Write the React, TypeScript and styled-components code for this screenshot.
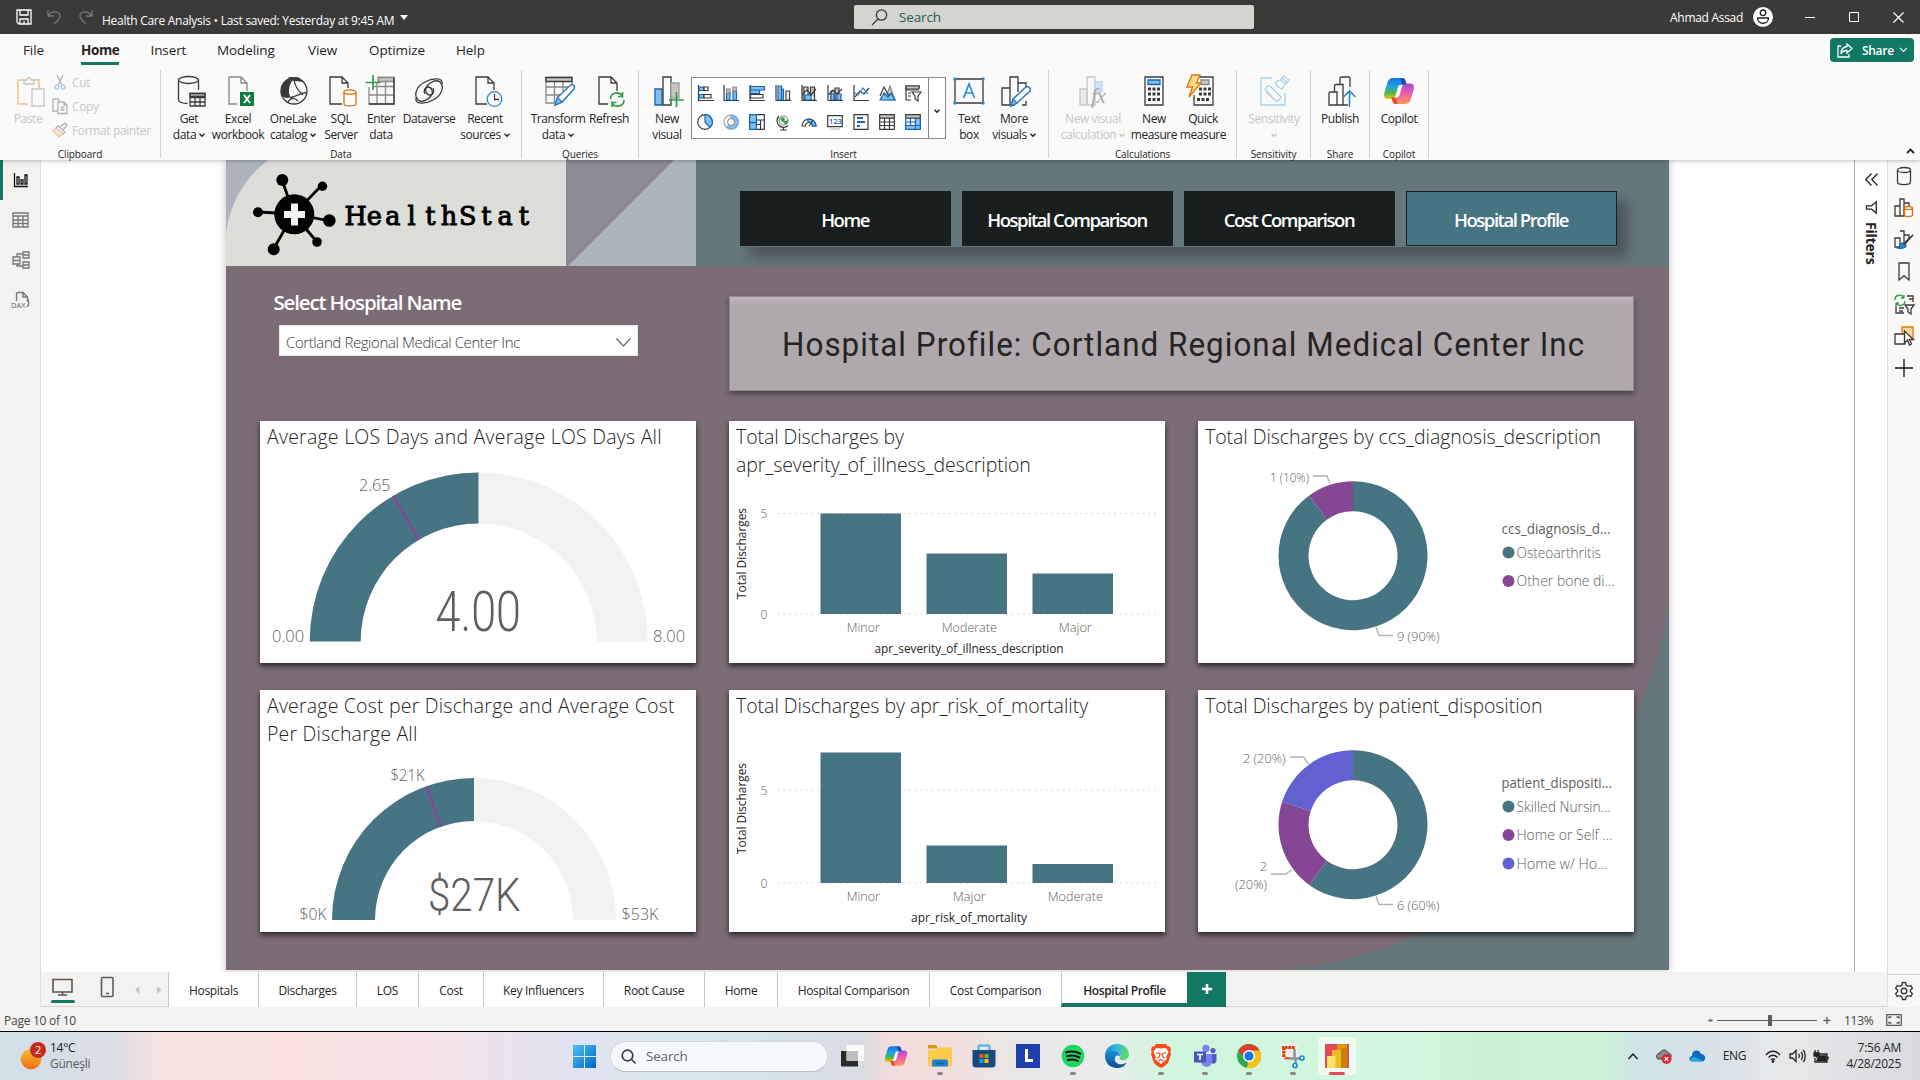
import React from "react";
import styled, { createGlobalStyle } from "styled-components";

const UI = `"Open Sans", "Noto Sans", sans-serif`;
const DIN = `Roboto, "Liberation Sans", sans-serif`;
const TEAL = "#467483";
const PLUM = "#7b6c76";
const SLATE = "#64777d";
const PURPLE = "#854794";
const BLUE = "#6161d1";
const GREEN = "#117865";
const INK = "#252423";
const GREY = "#605e5c";

const Global = createGlobalStyle`
  * { box-sizing: border-box; }
  html, body { margin: 0; padding: 0; }
  body { width: 1920px; height: 1080px; overflow: hidden; font-family: ${UI}; color: ${INK}; background: #fff; font-stretch: 90%; }
  svg { display: block; flex: none; overflow: visible; }
`;

const Screen = styled.div`
  width: 1920px;
  height: 1080px;
  display: flex;
  flex-direction: column;
`;

/* ---------- title bar ---------- */
const TitleBar = styled.header`
  height: 34px;
  background: #3b3a39;
  color: #fff;
  display: grid;
  grid-template-columns: 854px 400px 1fr;
  align-items: center;
`;
const TitleLeft = styled.div`
  display: flex;
  align-items: center;
  padding-left: 16px;
  height: 34px;
`;
const QuickIcon = styled.span<{ $gap: number }>`
  margin-right: ${(p) => p.$gap}px;
`;
const DocName = styled.span`
  font-size: 12px;
  letter-spacing: -0.27px;
  padding-top: 7px;
  white-space: pre;
`;
const Caret = styled.span`
  width: 0;
  height: 0;
  margin-left: 6px;
  border: 4px solid transparent;
  border-top: 5px solid #fff;
  border-bottom: 0;
`;
const TopSearch = styled.div`
  height: 24px;
  background: #d4d4d1;
  border-radius: 2px;
  color: #245c4f;
  display: flex;
  align-items: center;
  gap: 11px;
  padding-left: 17px;
  font-size: 13.5px;
  letter-spacing: -0.15px;
`;
const TitleRight = styled.div`
  display: flex;
  align-items: center;
  justify-content: flex-end;
  font-size: 12px;
  letter-spacing: -0.3px;
  padding-right: 16px;
`;
const UserBadge = styled.svg`
  margin-left: 10px;
`;
const WinButtons = styled.div`
  display: flex;
  align-items: center;
  gap: 34px;
  margin-left: 32px;
`;

/* ---------- ribbon ---------- */
const Ribbon = styled.section`
  height: 126px;
  background: #fafafa;
  display: flex;
  flex-direction: column;
  position: relative;
  z-index: 2;
  box-shadow: 0 1px 4px rgba(0, 0, 0, 0.25);
`;
const TabRow = styled.nav`
  height: 36px;
  display: flex;
  padding-left: 23px;
  align-items: flex-start;
`;
const RibbonTab = styled.span<{ $w: number; $active?: boolean }>`
  width: ${(p) => p.$w}px;
  font-size: 13.5px;
  line-height: 20px;
  padding-top: 6px;
  font-weight: ${(p) => (p.$active ? 700 : 400)};
  letter-spacing: ${(p) => (p.$active ? "-0.4px" : "-0.1px")};
  > i {
    display: block;
    width: 38px;
    height: 3px;
    margin-top: 2px;
    background: ${GREEN};
  }
`;
const ShareButton = styled.button`
  margin: 4px 6px 0 auto;
  width: 84px;
  height: 24px;
  border: 0;
  border-radius: 4px;
  background: ${GREEN};
  color: #fff;
  font: 600 12px ${UI};
  font-stretch: 90%;
  letter-spacing: -0.3px;
  display: flex;
  align-items: center;
  gap: 5px;
  padding: 0 8px 0 7px;
  span { margin-left: 4px; }
`;
const Groups = styled.div`
  display: flex;
  height: 90px;
`;
const Group = styled.div<{ $w: number; $pl: number }>`
  width: ${(p) => p.$w}px;
  height: 88px;
  border-right: 1px solid #d2d0ce;
  display: flex;
  flex-direction: column;
  > div {
    flex: none;
    height: 77px;
    display: flex;
    padding-left: ${(p) => p.$pl}px;
  }
`;
const GroupName = styled.span`
  flex: none;
  font-size: 10px;
  line-height: 14px;
  letter-spacing: -0.1px;
  text-align: center;
`;
const Tool = styled.div<{ $w: number; $off?: boolean; $dx: number }>`
  width: ${(p) => p.$w}px;
  display: flex;
  flex-direction: column;
  align-items: center;
  padding-top: 5px;
  font-size: 12px;
  line-height: 16px;
  letter-spacing: -0.42px;
  white-space: nowrap;
  color: ${(p) => (p.$off ? "#c8c6c4" : INK)};
  > svg { margin: 0 0 3.5px ${(p) => p.$dx * 2}px; }
`;
const ToolLine = styled.span`
  display: flex;
  align-items: center;
  gap: 3px;
  height: 16px;
`;
const SmallTools = styled.div`
  display: flex;
  flex-direction: column;
`;
const SmallTool = styled.div`
  height: 24px;
  display: flex;
  align-items: center;
  gap: 4px;
  padding-left: 1px;
  font-size: 12px;
  letter-spacing: -0.36px;
  color: #c8c6c4;
`;
const Gallery = styled.div`
  width: 255px;
  height: 62px;
  margin: 7px 3px 0 4px;
  border: 1px solid #8a8886;
  background: #fff;
  display: flex;
`;
const GalleryGrid = styled.div`
  flex: 1;
  display: grid;
  grid-template-columns: repeat(9, 26px);
  grid-template-rows: 29px 29px;
  place-items: center;
`;
const GalleryMore = styled.div`
  width: 17px;
  border-left: 1px solid #8a8886;
  display: flex;
  align-items: center;
  justify-content: center;
  padding-top: 6px;
`;
const Collapse = styled.div`
  margin-left: auto;
  align-self: flex-end;
  padding: 0 5px 6px 0;
`;

/* ---------- workspace ---------- */
const Work = styled.main`
  height: 847px;
  display: flex;
`;
const LeftRail = styled.aside`
  width: 41px;
  background: #f3f2f1;
  border-right: 1px solid #e1dfdd;
  display: flex;
  flex-direction: column;
`;
const RailItem = styled.div<{ $h: number; $active?: boolean }>`
  height: ${(p) => p.$h}px;
  display: flex;
  align-items: center;
  padding-left: ${(p) => (p.$active ? 10 : 12)}px;
  border-left: ${(p) => (p.$active ? `3px solid ${GREEN}` : "0")};
`;
const Center = styled.div`
  width: 1846px;
  display: flex;
  flex-direction: column;
`;
const CanvasRow = styled.div`
  height: 812px;
  display: flex;
  background: #fff;
`;
const CanvasArea = styled.div`
  width: 1813px;
  padding-left: 185px;
`;
const Page = styled.div`
  width: 1443px;
  height: 810px;
  box-shadow: 0 0 8px rgba(0, 0, 0, 0.25);
  background:
    linear-gradient(${PLUM}, ${PLUM}) 0 0 / 1017px 810px no-repeat,
    linear-gradient(${PLUM}, ${PLUM}) 0 0 / 1443px 382px no-repeat,
    radial-gradient(circle at 1017px 382px, ${PLUM} 429px, ${SLATE} 431px);
`;
const PageHeader = styled.div`
  height: 106px;
  display: flex;
  background: ${SLATE};
`;
const Brand = styled.div`
  width: 340px;
  height: 106px;
  background:
    linear-gradient(#dddeda, #dddeda) 105px 0 / 235px 106px no-repeat,
    linear-gradient(#dddeda, #dddeda) 0 85px / 340px 21px no-repeat,
    radial-gradient(circle at 105px 85px, #dddeda 105px, #adb4bd 106px);
`;
const Wedge = styled.div`
  width: 130px;
  height: 106px;
  background: linear-gradient(135deg, #8c8a94 76px, #adb4bd 77px);
`;
const NavWrap = styled.div`
  padding: 31px 0 0 44px;
`;
const NavButtons = styled.div`
  display: flex;
  gap: 11px;
  height: 56px;
  background: ${SLATE};
  box-shadow: 10px 10px 12px rgba(55, 52, 56, 0.55);
  clip-path: inset(0 -28px -19px 0);
`;
const NavButton = styled.div<{ $active?: boolean }>`
  width: 211px;
  height: 55px;
  background: ${(p) => (p.$active ? TEAL : "#191f1e")};
  border: 1px solid #191f1e;
  color: #fff;
  font-size: 18.5px;
  font-weight: 600;
  letter-spacing: -1.45px;
  display: flex;
  align-items: center;
  justify-content: center;
  padding: 2px 1px 0 0;
`;
const Selector = styled.div`
  display: grid;
  grid-template-columns: 469px 905px;
  height: 155px;
  padding-left: 34px;
`;
const Slicer = styled.div`
  padding: 20.5px 0 0 13.5px;
`;
const SlicerTitle = styled.div`
  font-size: 20.5px;
  font-weight: 600;
  line-height: 30px;
  letter-spacing: -1.17px;
  color: #fff;
`;
const Dropdown = styled.div`
  margin: 8.5px 0 0 5.5px;
  width: 359px;
  height: 31px;
  background: #fff;
  border: 1px solid #e6e6e6;
  display: flex;
  align-items: center;
  justify-content: space-between;
  padding: 3px 6px 0 6px;
  font-size: 15px;
  font-weight: 320;
  letter-spacing: -0.4px;
  color: #3a3938;
`;
const Banner = styled.div`
  margin-top: 30px;
  height: 95px;
  background: linear-gradient(#c2b6be, #afa9ad 8px);
  border: 1px solid #978c93;
  border-top-color: #9b8b95;
  box-shadow: 0 3px 5px rgba(50, 40, 46, 0.6);
  display: flex;
  align-items: center;
  justify-content: center;
  padding: 1px 0 0 4px;
`;
const BannerText = styled.span`
  font-family: ${DIN};
  font-size: 34px;
  white-space: nowrap;
  letter-spacing: 1.1px;
  transform: scaleX(0.924);
`;
const CardGrid = styled.div`
  display: grid;
  grid-template-columns: repeat(3, 436px);
  grid-auto-rows: 242px;
  gap: 27px 33px;
  padding-left: 34px;
`;
const Card = styled.div`
  background: #fff;
  box-shadow: 0 3px 5px rgba(30, 25, 28, 0.85);
  display: flex;
  flex-direction: column;
`;
const CardTitle = styled.div<{ $lines: number; $ls: number }>`
  height: ${(p) => (p.$lines === 2 ? 60 : 32)}px;
  padding: 2px 0 0 7px;
  font-size: 19.5px;
  font-weight: 300;
  line-height: 28px;
  letter-spacing: ${(p) => p.$ls}px;
  white-space: pre;
`;
const FilterPane = styled.aside`
  width: 33px;
  border-left: 1px solid #b3b0ad;
  display: flex;
  flex-direction: column;
  align-items: center;
  padding: 13px 0 0 0;
  gap: 15px;
`;
const FilterLabel = styled.span`
  writing-mode: vertical-rl;
  font-size: 14px;
  font-weight: 700;
  line-height: 16px;
  letter-spacing: -0.2px;
  margin-top: -7px;
`;
const RightRail = styled.aside`
  width: 33px;
  background: #faf9f8;
  border-left: 1px solid #e1dfdd;
  display: flex;
  flex-direction: column;
  align-items: center;
`;
const RightItem = styled.div`
  height: 32px;
  display: flex;
  align-items: center;
`;
const Gear = styled.div`
  margin-top: auto;
  width: 32px;
  height: 33px;
  border-top: 1px solid #d2d0ce;
  display: flex;
  align-items: center;
  justify-content: center;
`;

/* ---------- page tabs / status ---------- */
const PageTabs = styled.div`
  height: 35px;
  background: #f3f2f1;
  border-bottom: 1px solid #d8d6d4;
  display: flex;
`;
const ViewModes = styled.div`
  width: 127px;
  display: flex;
  align-items: center;
`;
const PageTab = styled.div<{ $w: number; $active?: boolean }>`
  width: ${(p) => p.$w}px;
  height: 35px;
  background: #fff;
  border-left: 1px solid #c8c6c4;
  border-bottom: ${(p) => (p.$active ? `4px solid ${GREEN}` : "0")};
  padding-top: 1px;
  font-size: 12px;
  line-height: 35px;
  text-align: center;
  letter-spacing: ${(p) => (p.$active ? "-0.4px" : "-0.3px")};
  font-weight: ${(p) => (p.$active ? 600 : 400)};
  white-space: nowrap;
`;
const AddPage = styled.div`
  width: 39px;
  height: 35px;
  background: ${GREEN};
  display: flex;
  align-items: center;
  justify-content: center;
  padding-bottom: 2px;
`;
const StatusBar = styled.footer`
  height: 25px;
  background: #f3f2f1;
  border-bottom: 1px solid #000;
  display: flex;
  align-items: center;
  justify-content: space-between;
  padding: 2px 18px 0 4px;
  font-size: 12px;
  letter-spacing: -0.25px;
  color: #484644;
`;
const ZoomBox = styled.div`
  display: flex;
  align-items: center;
  gap: 12.5px;
`;

/* ---------- taskbar ---------- */
const Taskbar = styled.div`
  height: 48px;
  display: grid;
  grid-template-columns: 562px 1fr 292px;
  background: linear-gradient(90deg, #cfe0e6 0, #dadde6 110px, #f6e0df 160px, #f9e2e0 300px, #f3dfe6 440px, #e2e3f0 560px, #d9e9f0 680px, #d6e3ea 770px, #d9dbe3 860px, #f3dcdc 890px, #f1dfdd 960px, #e6e8e8 1030px, #ececec 1100px, #cff5dc 1170px, #d3f6de 1400px, #c8f2d3 1480px, #cdf3d6 1600px, #cfe3e8 1640px, #dbe2e8 1740px, #e8e8ea 1780px, #d9dadf 1920px);
`;
const Weather = styled.div`
  display: flex;
  align-items: center;
  gap: 3px;
  padding-left: 20px;
  font-size: 12px;
  line-height: 16px;
  letter-spacing: -0.25px;
  span { display: block; color: #5c5c60; }
  span:first-child { color: #1b1b1b; }
`;
const Apps = styled.div`
  display: flex;
  align-items: center;
  padding-left: 11px;
`;
const TaskSearch = styled.div`
  width: 218px;
  height: 31px;
  margin: 0 2px 0 14px;
  border-radius: 16px;
  background: rgba(250, 252, 254, 0.85);
  border: 1px solid #d3d9de;
  border-bottom-color: #b9bec3;
  display: flex;
  align-items: center;
  gap: 10px;
  padding-left: 10px;
  font-size: 13.5px;
  letter-spacing: -0.2px;
  color: #5f6266;
`;
const AppButton = styled.div<{ $state?: "run" | "active" }>`
  width: 38px;
  height: 38px;
  margin: 0 3.05px;
  border-radius: 4px;
  background: ${(p) => (p.$state === "active" ? "rgba(255,255,255,0.6)" : "none")};
  display: flex;
  flex-direction: column;
  align-items: center;
  padding-top: 7px;
  gap: 4px;
  &::after {
    content: "";
    width: ${(p) => (p.$state === "active" ? 16 : 6)}px;
    height: 3px;
    border-radius: 2px;
    background: ${(p) => (p.$state === "active" ? "#e74856" : p.$state ? "#858585" : "transparent")};
  }
`;
const Tray = styled.div`
  display: flex;
  align-items: center;
  font-size: 12px;
  letter-spacing: -0.25px;
  line-height: 16px;
`;
const TrayItem = styled.div<{ $w: number }>`
  width: ${(p) => p.$w}px;
  display: flex;
  justify-content: center;
`;
const Clock = styled.div`
  margin-left: auto;
  padding-right: 19px;
  text-align: right;
  white-space: pre;
`;

/* ---------- icon helpers ---------- */
type SP = { w?: number; h?: number; vb?: string; children?: React.ReactNode; s?: string; sw?: number };
const Ico = ({ w = 32, h = 32, vb, children, s = "#3b3a39", sw = 1.3 }: SP) => (
  <svg width={w} height={h} viewBox={vb || `0 0 ${w} ${h}`} fill="none" stroke={s} strokeWidth={sw}>
    {children}
  </svg>
);
const Chev = ({ c = "#252423", w = 6, sw = 1.4 }: { c?: string; w?: number; sw?: number }) => (
  <Ico w={w} h={w / 2 + 1} vb="0 0 6 4" s={c} sw={sw}><path d="M.5.7 3 3.2 5.5.7" /></Ico>
);
const CopilotArt = ({ size = 32, id }: { size?: number; id: string }) => (
  <svg width={size} height={size} viewBox="0 0 32 32">
    <defs>
      <linearGradient id={id + "a"} x1="0" y1="0" x2="0" y2="1">
        <stop offset="0" stopColor="#1e6fe0" /><stop offset=".4" stopColor="#1aa3e8" /><stop offset=".7" stopColor="#52b44b" /><stop offset="1" stopColor="#f7c90f" />
      </linearGradient>
      <linearGradient id={id + "b"} x1="0" y1="0" x2="0" y2="1">
        <stop offset="0" stopColor="#a54be0" /><stop offset=".5" stopColor="#ef5da8" /><stop offset="1" stopColor="#fd9a56" />
      </linearGradient>
    </defs>
    <path d="M19 3c2 0 3 1 3.500 3l1.200 4h-5.500c-2 0-3 1-3.500 3l-2 7c-1 3-2 4-4.500 4H5c-4 0-4.500-3-3.500-6.500l3-10C5.500 4.500 7 3 10 3z" fill={`url(#${id}a)`} />
    <path d="M13 29c-2 0-3-1-3.500-3l-1-3.500h4.800c2 0 3-1 3.500-3l2-7c1-3 2-4 4.500-4H27c4 0 4.500 3 3.500 6.500l-3 10C26.500 27.500 25 29 22 29z" fill={`url(#${id}b)`} />
    <path d="M17.500 3H19c2 0 3 1 3.500 3l1 3.500h-4.300z" fill="#1846c0" />
    <path d="M14.500 29H13c-2 0-3-1-3.500-3l-1-3.500h4.300z" fill="#e8492f" />
    <path d="M16.500 10h3c-1 .7-1.400 1.500-1.800 3l-2 7c-.5 1.500-1.200 2.500-2.700 2.500h-1.500c1-.7 1.300-1.300 1.700-2.500l2-7c.4-1.500.6-2.300 1.300-3z" fill="#fff" opacity=".9" />
  </svg>
);

const icons: Record<string, React.ReactNode> = {
  paste: <Ico s="#c8c6c4"><path d="M9 5H3v24h10M18 5h6v8" stroke="#f3cfa4" strokeWidth="2" /><path d="M9 9V5h3c0-3 4-3 4 0h3v4zM17 14h12v17H17z" /></Ico>,
  get: <Ico><ellipse cx="13.500" cy="5" rx="10" ry="3.500" /><path d="M3.500 5v20c0 2 4 3.500 9 3.500M23.500 5v10" /><path d="M15 18.500h15V31H15zM15 22.500h15M15 27h15M20 19v12M25 19v12" /><path d="M15 18.500h15v3H15z" fill="#b3b0ad" /></Ico>,
  excel: <Ico s="#8a8886"><path d="M14 29H6V2h12l6 6v8M18 2v6h6" /><path d="M17 17h14v14H17z" fill="#107c41" stroke="none" /><path d="m21 20 6 8m0-8-6 8" stroke="#fff" strokeWidth="1.900" /></Ico>,
  lake: <Ico><circle cx="16" cy="16" r="13" /><path d="M13 3C6 6 3 11 3.500 19c2 3 5 4 8 3-3-6-1-13 1.500-19z" fill="#3b3a39" /><path d="M11 22C9 15 11 7 15 4M16 5c1 6 4 11 9 15M12 22.500c8-.5 9-5 17-5M10 27c2-4 6-5 10-1" /><path d="M12 3h8l4 3-9-1z" fill="#3b3a39" /></Ico>,
  sql: <Ico><path d="M15 29H3V2h12l6 6v5M15 2v6h6" /><g stroke="#d8700f" fill="#fff"><path d="M17 17v12c0 2.500 12 2.500 12 0V17" /><ellipse cx="23" cy="17" rx="6" ry="2.200" /></g></Ico>,
  enter: <Ico><path d="M13 2.500h16V29H4V12M4 20h25M8 11.500h21M12 8v21M20.500 6v23" stroke="#8a8886" /><path d="M13 2.500h16v4H13z" fill="#c8c6c4" stroke="#8a8886" /><path d="M29 2.500V29H4" /><path d="M8 0v15M.5 7.500h15" stroke="#2f9c48" strokeWidth="1.700" /></Ico>,
  verse: <Ico><path d="M29 9c2-7-10-6-17-2C2 12 1 21 5 25c4 3 10 0 13-4 3-4 1-9-3-9-3 0-5 4-3 7" /><path d="M3 23c-2 7 10 6 17 2 10-5 11-14 7-18-4-3-10 0-13 4-3 4-1 9 3 9 3 0 5-4 3-7" /></Ico>,
  recent: <Ico><path d="M16 29H5V2h12l6 6v7M17 2v6h6" /><circle cx="23.500" cy="24" r="7.300" stroke="#2b88c8" fill="#fff" /><path d="M23.500 19v5.500H28" /></Ico>,
  transform: <Ico><path d="M14 28H3V2.500h26V11M3 12h22M3 20h15M11.500 7v21M20 7v9" stroke="#8a8886" /><path d="M3 2.500h26v4H3z" fill="#c8c6c4" /><path d="m12 30 2.500-7.500L27 10.500c3-2 5.500 0 4 3.500L19 27z" fill="#fff" stroke="#2b7cc4" strokeWidth="1.500" /><path d="m12 30 2.500-7.500L19 27z" fill="#83beec" stroke="#2b7cc4" /></Ico>,
  refresh: <Ico><path d="M14 29H5V2h12l6 6v8M17 2v6h6" /><path d="M16.500 24c0-7 9-8 12-3v-4M28.500 21.500h-4.500M30 25c0 7-9 8-12 3v4M18 27.500h4.500" stroke="#2f9c48" strokeWidth="1.600" /></Ico>,
  visual: <Ico><path d="M2 14h7v16H2z" fill="#83beec" stroke="#1267b4" /><path d="M10 2h8v28h-8z" fill="#fff" /><path d="M18 8h8v15h-8z" fill="#c8c6c4" stroke="#a19f9d" /><path d="M23.500 17v15M16 25h15" stroke="#2f9c48" strokeWidth="1.700" /></Ico>,
  text: <Ico><path d="M2 4h28v24H2z" /><g fill="#1d8fd8" stroke="none"><path d="M.500 2.500h3v3h-3zM28.500 2.500h3v3h-3zM.500 26.500h3v3h-3zM28.500 26.500h3v3h-3z" /></g><path d="m10.500 23 5.500-14 5.500 14M12.500 18h7" stroke="#2b88d8" strokeWidth="1.700" /></Ico>,
  more: <Ico><path d="M2 30V13h8v17zM10 30V2h8v15M18 8h8v5M10 30h5M22 30h4v-4" /><path d="m11 31 2-7L26 12c3-1 5 1 4 4L17 28z" fill="#fff" stroke="#2b7cc4" strokeWidth="1.500" /><path d="m11 31 2-7 4 4z" fill="#83beec" stroke="#2b7cc4" /></Ico>,
  vcalc: <Ico s="#c8c6c4"><path d="M3 14h7v16H3z" fill="#edebe9" /><path d="M10 2h8v28h-8z" /><path d="M18 7h7v10h-7z" fill="#cfe4f6" stroke="#b5d4ee" /><text x="14" y="28" fontFamily="Liberation Serif, serif" fontStyle="italic" fontSize="21" fill="#a9a7a5" stroke="none">fx</text></Ico>,
  calc: <Ico><path d="M7 2h18v28H7z" fill="#fff" /><path d="M10 5h12v4.500H10z" fill="#83beec" stroke="#1267b4" /><path d="M10 14h3m1.500 0h3m1.500 0h3M10 19h3m1.500 0h3m1.500 0h3M10 24.500h3m1.500 0h3m1.500 0h3" strokeWidth="3" /></Ico>,
  quick: <Ico><path d="M10 2h16v28H7V20" fill="#fff" /><path d="M14 5h8v4.500h-8z" fill="#c8c6c4" stroke="#8a8886" /><path d="M12 14h3m1.500 0h3m1.500 0h3M12 19h3m1.500 0h3m1.500 0h3M10 24.500h3m1.500 0h3m1.500 0h3" strokeWidth="3" /><path d="M5 0h8L9.500 8H14L2 22l3.500-10H0z" fill="#fbdc8c" stroke="#e07a10" strokeWidth="1.400" /></Ico>,
  sens: <Ico s="#a9d3ea"><path d="M14 3H3v27h24V18" /><path d="m8 17 11 10M7 14c2-4 4-4 7-1l9 9c-2 5-5 5-8 1zM18 7c4-4 6-1 9 2l-3 5c-3-1-6-3-6-7zM24 3l6 5M22 5l4-4 5 4-4 4" /></Ico>,
  publish: <Ico><path d="M3 30V18.500c0-1 .5-1.500 1.500-1.500H11v13zM8.500 17v-6c0-1 .5-1.500 1.500-1.500h7V30h-6M14 9.500V3.500c0-1 .5-1.500 1.500-1.500h7c1 0 1.500.5 1.500 1.500V12M17 30h5" /><path d="M23.500 32V16M17.500 22l6-6 6 6" stroke="#2b88c8" strokeWidth="1.600" /></Ico>,
  copilot: <CopilotArt id="rib" />,
};
const iconShift: Record<string, number> = { paste: 2.5, get: 2, excel: 1, lake: 1, sql: 2, recent: 1.5, transform: 1, refresh: 1, visual: 1.5, more: 2, publish: 2 };

const A = "#1267b4";
const L = "#83beec";
const G = "#c8c6c4";
const galleryIcons: React.ReactNode[] = [
  <><path d="M1.500 0v15.500H17" /><path d="M2 2h5v3.500H2zM2 9.500h5V13H2z" fill={L} stroke={A} /><path d="M7 2h4v3.500H7zM7 9.500h7V13H7z" fill="#fff" /></>,
  <><path d="M1 0v15.500H16" /><path d="M3.500 8h3.500v7H3.500zM10 6h3.500v9H10z" fill={L} stroke={A} /><path d="M3.500 4h3.500v4H3.500zM10 2h3.500v4H10z" fill={G} stroke="#8a8886" /></>,
  <><path d="M1 0v15.500H16" /><path d="M1.500 1.500h14V5h-14zM1.500 5h9v3.500h-9z" fill={L} stroke={A} /><path d="M1.500 9.500H14V13H1.500z" fill="#fff" /></>,
  <><path d="M1 0v15.500H16" /><path d="M3 1h3.500v14H3zM6.500 4h2v11h-2z" fill={L} stroke={A} /><path d="M11 6h3.500v9H11z" fill="#fff" /></>,
  <><path d="M1 0v15.500H16M3 2h4v13H3zM9.500 2h4v13h-4z" fill={G} /><path d="M4 10h6v5H4z" fill={L} stroke={A} /><path d="m1 10 5-5 4 5 5-6" /></>,
  <><path d="M1 0v15.500H16" /><path d="M4 6h4v9H4zM8 3h4v12H8z" fill={G} /><path d="M4 9h3v6H4zM10 9h4v6h-4z" fill={L} stroke={A} /><path d="m1 10 5-5 4 4 5-5" /></>,
  <><path d="M1 0v15.500H16" /><path d="m2 12 5-6 4 3 5-6" /><path d="m2 8 3 2 5-7 5 6" stroke="#2b88d8" /></>,
  <><path d="M6 15 11 1l5 14z" fill={G} stroke="#8a8886" /><path d="M1 15 5 8l4 4 3-4 4 7z" fill={L} stroke={A} /><path d="M1 11 5 2l5 9" /></>,
  <><path d="M14 3V1H1v4h13M1 5v10h5" /><path d="M1 1h13v3H1z" fill={G} /><path d="M7 7h9l-3 4v5l-3-2v-3zM3 8h3M3 11h3" /></>,
  <><circle cx="8" cy="8" r="7.300" /><path d="M8 8V.700A7.300 7.300 0 0 1 13 13.300z" fill={L} stroke={A} /></>,
  <><circle cx="8" cy="8" r="7" stroke="#a19f9d" /><path d="M8 1a7 7 0 1 1-4 12.500l2-3A3.400 3.400 0 1 0 8 4.600z" fill={L} stroke="#6ba7dc" /><circle cx="8" cy="8" r="3.400" stroke="#a19f9d" fill="#fff" /></>,
  <><path d="M.7.700h14.600v14.600H.700z" /><path d="M.7.700h6.800v8H.700zM.700 8.700h6.800v6.600H.700z" fill={L} stroke={A} /><path d="M7.500 6h8M11.500 6v9.300M7.500 10.500h4" /></>,
  <><circle cx="8.500" cy="6.500" r="4.500" fill="#f3f2f1" stroke="#8a8886" /><path d="M4 2a6.500 6.500 0 0 0 9 9.500M8.500 13.500V16M5 16h7" /><path d="M6 4h3v3H7zM9 8l3-1-1 3z" fill="#2f9c48" stroke="#2f9c48" /></>,
  <><path d="M1 12a7 7 0 0 1 14 0h-3.500a3.500 3.500 0 0 0-7 0z" fill="#fff" /><path d="M6 5.500A7 7 0 0 1 15 12h-3.500A3.500 3.500 0 0 0 8 8.500z" fill={L} stroke={A} /><path d="m8 12 4-6" /></>,
  <><path d="M.7 1.700h14.600v11H.700z" /><path d="M3 15h10" stroke={G} /><text x="2" y="10.300" fontSize="7.500" fontFamily="Open Sans, sans-serif" fontWeight="600" fill={A} stroke="none">123</text></>,
  <><path d="M1 .7h14v14.600H1z" /><path d="M4 4h6M4 8h8M4 12h3" stroke={A} strokeWidth="2" /></>,
  <><path d="M.7.700h14.600v14.600H.700zM.700 4h14.600M.7 8h14.600M.7 11.500h14.600M5.500 4v11M10.500 4v11" /><path d="M.7.700h14.600V4H.700z" fill={G} /></>,
  <><path d="M.7 4h14.600v11.300H.700zM.700 8h14.600M.7 11.500h14.600M5.500 4v11M10.500 4v11" stroke={A} /><path d="M10.500 4h4.800v11.300h-4.800zM.700 11.500h14.600v3.800H.7z" fill={L} stroke={A} /><path d="M.7.700h14.600V4H.700z" fill={G} /></>,
];

type ToolDef = [string, number, string[], boolean?, boolean?];
const Tools = ({ list }: { list: ToolDef[] }) => (
  <>
    {list.map(([k, w, lines, arrow, off]) => (
      <Tool key={k} $w={w} $off={off} $dx={iconShift[k] || 0}>
        {icons[k]}
        {lines.map((l, i) => (
          <ToolLine key={i}>
            {l}
            {arrow && i === lines.length - 1 && <Chev c={off ? "#c8c6c4" : INK} />}
          </ToolLine>
        ))}
      </Tool>
    ))}
  </>
);

/* ---------- chart parts ---------- */
type TP = { x: number; y: number; w?: number; s: number; a?: "start" | "middle" | "end"; f?: string; wt?: number; fam?: string; children: string };
const T = ({ x, y, w, s, a = "start", f = GREY, wt = 335, fam = UI, children }: TP) => (
  <text x={x} y={y} fontSize={s} textAnchor={a} fill={f} fontWeight={wt} fontFamily={fam} textLength={w} lengthAdjust="spacingAndGlyphs">
    {children}
  </text>
);
const pt = (cx: number, cy: number, r: number, deg: number) => {
  const t = (deg * Math.PI) / 180;
  return [cx + r * Math.sin(t), cy - r * Math.cos(t)];
};
const ring = (cx: number, cy: number, R: number, r: number, a: number, b: number) => {
  const big = b - a > 180 ? 1 : 0;
  const [p, q, u, v] = [pt(cx, cy, R, a), pt(cx, cy, R, b), pt(cx, cy, r, b), pt(cx, cy, r, a)];
  return `M${p}A${R} ${R} 0 ${big} 1 ${q}L${u}A${r} ${r} 0 ${big} 0 ${v}Z`;
};

const Plot = ({ x, top, bottom, children }: { x: number; top: number; bottom: number; children: React.ReactNode }) => (
  <svg width={436} height={bottom - top} viewBox={`${x} ${top} 436 ${bottom - top}`}>{children}</svg>
);

const Gauge = ({ cx, cy, R, r, target }: { cx: number; cy: number; R: number; r: number; target: number }) => {
  const [o, i] = [pt(cx, cy, R, target), pt(cx, cy, r, target)];
  return (
    <>
      <path d={ring(cx, cy, R, r, -90, 0)} fill={TEAL} />
      <path d={ring(cx, cy, R, r, 0, 90)} fill="#f3f2f1" />
      <path d={`M${o}L${i}`} stroke={PURPLE} strokeWidth="2.500" />
    </>
  );
};

type Bar = { name: string; top: number; w: number };
const barX = [820.5, 926.5, 1032.5];
const Bars = ({ y0, y5, bars, axis, axisW, mid }: { y0: number; y5: number; bars: Bar[]; axis: string; axisW: number; mid: number }) => (
  <>
    {[y0, y5].map((y) => (
      <line key={y} x1="778" x2="1157" y1={y} y2={y} stroke="#c8c6c4" strokeWidth="1" strokeDasharray="1.300 4.400" />
    ))}
    <T x={767.500} y={y5 + 4.500} w={7} s={13} a="end">5</T>
    <T x={767.500} y={y0 + 4.500} w={7} s={13} a="end">0</T>
    {bars.map((b, i) => (
      <React.Fragment key={b.name}>
        <rect x={barX[i]} y={b.top} width={80.500} height={y0 - b.top} fill={TEAL} />
        <T x={barX[i] + 42.800} y={y0 + 17.800} w={b.w} s={13.500} a="middle">{b.name}</T>
      </React.Fragment>
    ))}
    <T x={969} y={y0 + 39} w={axisW} s={13} a="middle" f={INK} wt={370}>{axis}</T>
    <g transform={`translate(746 ${mid}) rotate(-90)`}>
      <T x={0} y={0} w={91} s={13} a="middle" f={INK} wt={370}>Total Discharges</T>
    </g>
  </>
);

const Legend = ({ y, title, tw, items }: { y: number; title: string; tw: number; items: [string, string, number][] }) => (
  <>
    <T x={1501.500} y={y} w={tw} s={14.500} wt={480}>{title}</T>
    {items.map(([name, color, w], i) => (
      <React.Fragment key={name}>
        <circle cx={1508.500} cy={y + 18.500 + i * 28.500} r={6} fill={color} />
        <T x={1516.500} y={y + 23.600 + i * 28.600} w={w} s={15}>{name}</T>
      </React.Fragment>
    ))}
  </>
);
const Leader = ({ d }: { d: string }) => <path d={d} fill="none" stroke="#b3b0ad" strokeWidth="1.300" />;

/* The wordmark is set on a fixed pitch, each letter centred in its cell. */
const wordPitch = Array.from("HealthStat", (_, i) => 355.5 + i * 18.7).join(" ");

/* ---------- taskbar art ---------- */
const S24 = ({ children }: { children: React.ReactNode }) => <svg width="24" height="24" viewBox="0 0 24 24">{children}</svg>;

const pageTabs: [string, number][] = [
  ["Hospitals", 90], ["Discharges", 98], ["LOS", 62], ["Cost", 65], ["Key Influencers", 120],
  ["Root Cause", 101], ["Home", 73], ["Hospital Comparison", 152], ["Cost Comparison", 132], ["Hospital Profile", 126],
];

export default function App() {
  return (
    <Screen>
      <Global />
      <TitleBar>
        <TitleLeft>
          <QuickIcon $gap={15}>
            <Ico w={16} h={16} s="#fff"><path d="M1 1h14v14H3l-2-2zM4 1v5h8V1M4 15v-5h8v5M8 12v3" /></Ico>
          </QuickIcon>
          <QuickIcon $gap={16}>
            <Ico w={15} h={16} s="#7a7876"><path d="M1 1v6h6M1.500 6.500C5 1 13 2 13 7c0 3-3 5-6 8" /></Ico>
          </QuickIcon>
          <QuickIcon $gap={9}>
            <Ico w={15} h={16} s="#7a7876"><path d="M14 1v6H8M13.500 6.500C10 1 2 2 2 7c0 3 3 5 6 8" /></Ico>
          </QuickIcon>
          <DocName>Health Care Analysis • Last saved: Yesterday at 9:45 AM</DocName>
          <Caret />
        </TitleLeft>
        <TopSearch>
          <Ico w={17} h={17} s="#3b3a39"><circle cx="10.500" cy="6" r="5.200" /><path d="M7 10 1 16" /></Ico>
          Search
        </TopSearch>
        <TitleRight>
          Ahmad Assad
          <UserBadge width="20" height="20" viewBox="0 0 20 20">
            <circle cx="10" cy="10" r="10" fill="#fff" />
            <circle cx="10" cy="5.800" r="2.800" fill="none" stroke="#222" strokeWidth="1.300" />
            <path d="M4.500 11h11c0 7-11 7-11 0z" fill="none" stroke="#222" strokeWidth="1.300" />
          </UserBadge>
          <WinButtons>
            <Ico w={10} h={10} s="#fff" sw={1}><path d="M0 5.500h10" /></Ico>
            <Ico w={10} h={10} s="#fff" sw={1}><path d="M.5.500h9v9h-9z" /></Ico>
            <Ico w={11} h={11} s="#fff" sw={1.200}><path d="m.5.500 10 10m0-10-10 10" /></Ico>
          </WinButtons>
        </TitleRight>
      </TitleBar>

      <Ribbon>
        <TabRow>
          <RibbonTab $w={58}>File</RibbonTab>
          <RibbonTab $w={69.5} $active>Home<i /></RibbonTab>
          <RibbonTab $w={66.5}>Insert</RibbonTab>
          <RibbonTab $w={91}>Modeling</RibbonTab>
          <RibbonTab $w={61}>View</RibbonTab>
          <RibbonTab $w={87}>Optimize</RibbonTab>
          <RibbonTab $w={40}>Help</RibbonTab>
          <ShareButton>
            <Ico w={16} h={15} s="#fff"><path d="M4 3H1v11h11v-3M10 1l5 4.500L10 10V7.500C7 7.500 5 8.500 4 11c0-4 2-7 6-7.500z" /></Ico>
            <span>Share</span>
            <Chev c="#fff" w={9} sw={0.8} />
          </ShareButton>
        </TabRow>
        <Groups>
          <Group $w={161} $pl={5}>
            <div>
              <Tools list={[["paste", 46, ["Paste"], false, true]]} />
              <SmallTools>
                <SmallTool>
                  <Ico w={16} h={16} s="#b5b3b1"><path d="m5 1 5 10M11 1 6 11" /><circle cx="5" cy="13" r="2" stroke="#a9cfe8" /><circle cx="11" cy="13" r="2" stroke="#a9cfe8" /></Ico>
                  Cut
                </SmallTool>
                <SmallTool>
                  <Ico w={16} h={16} s="#b5b3b1"><path d="M5 13H1V1h5l2 2M6 4h6l3 3v8.500H6zM12 4v3h3M8.500 9.500h4M8.500 12h4" /></Ico>
                  Copy
                </SmallTool>
                <SmallTool>
                  <Ico w={16} h={16} s="#b5b3b1"><path d="m8 5 5-4 2 2-4 5M6 4l7 6-2 2-7-6z" /><path d="M4 6 1 9l6 6 4-3" stroke="#f0c39a" fill="#fbe6cf" /></Ico>
                  Format painter
                </SmallTool>
              </SmallTools>
            </div>
            <GroupName>Clipboard</GroupName>
          </Group>
          <Group $w={361} $pl={5}>
            <div>
              <Tools list={[
                ["get", 46, ["Get", "data"], true], ["excel", 52, ["Excel", "workbook"]], ["lake", 58, ["OneLake", "catalog"], true],
                ["sql", 38, ["SQL", "Server"]], ["enter", 42, ["Enter", "data"]], ["verse", 54, ["Dataverse"]], ["recent", 58, ["Recent", "sources"], true],
              ]} />
            </div>
            <GroupName>Data</GroupName>
          </Group>
          <Group $w={117} $pl={8}>
            <div><Tools list={[["transform", 56, ["Transform", "data"], true], ["refresh", 46, ["Refresh"]]]} /></div>
            <GroupName>Queries</GroupName>
          </Group>
          <Group $w={410} $pl={8}>
            <div>
              <Tools list={[["visual", 40, ["New", "visual"]]]} />
              <Gallery>
                <GalleryGrid>
                  {galleryIcons.map((g, i) => <Ico key={i} w={16} h={16} sw={1.200}>{g}</Ico>)}
                </GalleryGrid>
                <GalleryMore><Chev /></GalleryMore>
              </Gallery>
              <Tools list={[["text", 40, ["Text", "box"]], ["more", 50, ["More", "visuals"], true]]} />
            </div>
            <GroupName>Insert</GroupName>
          </Group>
          <Group $w={188} $pl={7}>
            <div>
              <Tools list={[["vcalc", 74, ["New visual", "calculation"], true, true], ["calc", 48, ["New", "measure"]], ["quick", 50, ["Quick", "measure"]]]} />
            </div>
            <GroupName>Calculations</GroupName>
          </Group>
          <Group $w={74} $pl={5}>
            <div><Tools list={[["sens", 64, ["Sensitivity", ""], true, true]]} /></div>
            <GroupName>Sensitivity</GroupName>
          </Group>
          <Group $w={59} $pl={3}>
            <div><Tools list={[["publish", 52, ["Publish"]]]} /></div>
            <GroupName>Share</GroupName>
          </Group>
          <Group $w={59} $pl={3}>
            <div><Tools list={[["copilot", 52, ["Copilot"]]]} /></div>
            <GroupName>Copilot</GroupName>
          </Group>
          <Collapse><Ico w={9} h={6} s="#252423" sw={1.800}><path d="m1 5 3.500-3.500L8 5" /></Ico></Collapse>
        </Groups>
      </Ribbon>

      <Work>
        <LeftRail>
          <RailItem $h={40} $active>
            <Ico w={16} h={16} s="#111"><path d="M1.500 1v13.500H15M4 5h2v7H4zM8 8h2v4H8zM12 3h2v9h-2z" /></Ico>
          </RailItem>
          <RailItem $h={40}>
            <Ico w={17} h={16} s="#797775"><path d="M1 1h15v14H1zM1 4h15M1 8h15M1 11.500h15M6 4v11M11 4v11" /></Ico>
          </RailItem>
          <RailItem $h={40}>
            <Ico w={18} h={18} s="#797775"><path d="M1 6h7v7H1zM1 9.500h7M11 1h6v6h-6zM11 4h6M11 11h6v6h-6zM11 14h6M5 6V3h6M5 13v2h6" /></Ico>
          </RailItem>
          <RailItem $h={40}>
            <Ico w={18} h={18} s="#797775"><path d="M4.500 10V3c0-1 .5-1.500 1.500-1.500h5L15.500 6v5M11 1.500V6h4.500M16 8c1 2 1 6-1 8" /><text x="-1" y="16.500" fontSize="7.500" fontFamily="Open Sans, sans-serif" fill="#605e5c" stroke="none">DAX</text></Ico>
          </RailItem>
        </LeftRail>

        <Center>
          <CanvasRow>
            <CanvasArea>
              <Page>
                <PageHeader>
                  <Brand>
                    <svg width="340" height="106" viewBox="226 160 340 106">
                      <g stroke="#000" strokeWidth="2.800">
                        <path d="m282 180 12 34 28-29M258 212l36 2 36 7M273.500 249l20-35 23.500 28" fill="none" />
                      </g>
                      <circle cx="294.300" cy="214.300" r="20" />
                      <circle cx="282.300" cy="180" r="6" /><circle cx="322.500" cy="186.300" r="4.700" /><circle cx="258" cy="212.300" r="5" />
                      <circle cx="329.300" cy="220.500" r="6.300" /><circle cx="273.700" cy="249.300" r="6" /><circle cx="317" cy="242" r="4.800" />
                      <path d="M291 203.500h7v7.500h7v7h-7v7.500h-7V218h-7v-7h7z" fill="#f4f4f2" />
                      <text x={wordPitch} y="225" textAnchor="middle" fontFamily="DejaVu Serif" fontSize="25.500" stroke="#000" strokeWidth="1">HealthStat</text>
                    </svg>
                  </Brand>
                  <Wedge />
                  <NavWrap>
                    <NavButtons>
                      <NavButton>Home</NavButton>
                      <NavButton>Hospital Comparison</NavButton>
                      <NavButton>Cost Comparison</NavButton>
                      <NavButton $active>Hospital Profile</NavButton>
                    </NavButtons>
                  </NavWrap>
                </PageHeader>
                <Selector>
                  <Slicer>
                    <SlicerTitle>Select Hospital Name</SlicerTitle>
                    <Dropdown>
                      Cortland Regional Medical Center Inc
                      <Ico w={15} h={9} s="#605e5c" sw={1.100}><path d="m.5.500 7 7.500 7-7.500" /></Ico>
                    </Dropdown>
                  </Slicer>
                  <Banner><BannerText>Hospital Profile: Cortland Regional Medical Center Inc</BannerText></Banner>
                </Selector>
                <CardGrid>
                  <Card>
                    <CardTitle $lines={1} $ls={0.24}>Average LOS Days and Average LOS Days All</CardTitle>
                    <Plot x={260} top={453} bottom={663}>
                      <Gauge cx={478.700} cy={641.500} R={169} r={118} target={-30.400} />
                      <T x={359} y={490.500} w={31.500} s={17}>2.65</T>
                      <T x={272} y={642} w={32} s={17}>0.00</T>
                      <T x={653} y={642} w={32} s={17}>8.00</T>
                      <T x={435.500} y={631} w={85.500} s={56} wt={300} fam={DIN}>4.00</T>
                    </Plot>
                  </Card>
                  <Card>
                    <CardTitle $lines={2} $ls={-0.08}>{"Total Discharges by\napr_severity_of_illness_description"}</CardTitle>
                    <Plot x={729} top={481} bottom={663}>
                      <Bars y0={614} y5={513.500} mid={553.500} axis="apr_severity_of_illness_description" axisW={189}
                        bars={[{ name: "Minor", top: 513.5, w: 33 }, { name: "Moderate", top: 553.5, w: 55 }, { name: "Major", top: 573.5, w: 33 }]} />
                    </Plot>
                  </Card>
                  <Card>
                    <CardTitle $lines={1} $ls={-0.05}>Total Discharges by ccs_diagnosis_description</CardTitle>
                    <Plot x={1198} top={453} bottom={663}>
                      <path d={ring(1353, 555.7, 74.5, 44.5, 0, 324)} fill={TEAL} />
                      <path d={ring(1353, 555.7, 74.5, 44.5, 324, 360)} fill={PURPLE} />
                      <Leader d="M1313 476h14l3 7.500M1376 627.500l3 8h14" />
                      <T x={1270} y={481.500} w={39} s={13.500}>1 (10%)</T>
                      <T x={1397} y={640.500} w={42.500} s={13.500}>9 (90%)</T>
                      <Legend y={534} title="ccs_diagnosis_d..." tw={109} items={[["Osteoarthritis", TEAL, 84.5], ["Other bone di...", PURPLE, 98]]} />
                    </Plot>
                  </Card>
                  <Card>
                    <CardTitle $lines={2} $ls={0.2}>{"Average Cost per Discharge and Average Cost\nPer Discharge All"}</CardTitle>
                    <Plot x={260} top={750} bottom={932}>
                      <Gauge cx={474} cy={920} R={142} r={99} target={-19.600} />
                      <T x={390.500} y={780.500} w={34} s={17}>$21K</T>
                      <T x={299.500} y={919.500} w={27} s={17}>$0K</T>
                      <T x={621.500} y={919.500} w={37} s={17}>$53K</T>
                      <T x={428} y={911} w={92.500} s={47} wt={300} fam={DIN}>$27K</T>
                    </Plot>
                  </Card>
                  <Card>
                    <CardTitle $lines={1} $ls={-0.03}>Total Discharges by apr_risk_of_mortality</CardTitle>
                    <Plot x={729} top={722} bottom={932}>
                      <Bars y0={883} y5={790} mid={808.500} axis="apr_risk_of_mortality" axisW={116}
                        bars={[{ name: "Minor", top: 752.5, w: 33 }, { name: "Major", top: 845.5, w: 33 }, { name: "Moderate", top: 864, w: 55 }]} />
                    </Plot>
                  </Card>
                  <Card>
                    <CardTitle $lines={1} $ls={-0.06}>Total Discharges by patient_disposition</CardTitle>
                    <Plot x={1198} top={722} bottom={932}>
                      <path d={ring(1353, 824.7, 74.5, 44.5, 0, 216)} fill={TEAL} />
                      <path d={ring(1353, 824.7, 74.5, 44.5, 216, 288)} fill={PURPLE} />
                      <path d={ring(1353, 824.7, 74.5, 44.5, 288, 360)} fill={BLUE} />
                      <Leader d="M1290 757h13.500l5 7M1271 874h15l6-4.500M1376 896.500l3 8h14" />
                      <T x={1243} y={762.500} w={42.500} s={13.500}>2 (20%)</T>
                      <T x={1260} y={870.500} w={7} s={13.500}>2</T>
                      <T x={1235} y={888.500} w={32} s={13.500}>(20%)</T>
                      <T x={1397} y={909.500} w={42.500} s={13.500}>6 (60%)</T>
                      <Legend y={788} title="patient_dispositi..." tw={110.500} items={[["Skilled Nursin...", TEAL, 94], ["Home or Self ...", PURPLE, 96], ["Home w/ Ho...", BLUE, 91]]} />
                    </Plot>
                  </Card>
                </CardGrid>
              </Page>
            </CanvasArea>
            <FilterPane>
              <Ico w={13} h={13} s="#252423"><path d="M6.500.500.800 6.500l5.700 6M12.500.500l-5.700 6 5.700 6" /></Ico>
              <Ico w={12} h={13} s="#252423"><path d="M11.300 .8v11.400L6.500 8.200H1.500V4.800h5z" /></Ico>
              <FilterLabel>Filters</FilterLabel>
            </FilterPane>
          </CanvasRow>
          <PageTabs>
            <ViewModes>
              <svg width="127" height="35" viewBox="41 972 127 35" fill="none">
                <path d="M53 979.500h19v12.500H53zM62.500 992v2.500M58 995h9" stroke="#5b5552" strokeWidth="1.600" />
                <rect x="51" y="1000" width="24" height="3" rx="1.500" fill={GREEN} />
                <rect x="101.500" y="977.500" width="11.500" height="19" rx="1" stroke="#605e5c" strokeWidth="1.600" />
                <path d="M106 993.500h3" stroke="#605e5c" strokeWidth="1.500" />
                <path d="m139.500 986-4.500 4 4.500 4zM157 986l4.500 4-4.500 4z" fill="#c8c6c4" />
              </svg>
            </ViewModes>
            {pageTabs.map(([name, w]) => (
              <PageTab key={name} $w={w} $active={name === "Hospital Profile"}>{name}</PageTab>
            ))}
            <AddPage><Ico w={12} h={12} s="#fff" sw={2.600}><path d="M6 1v10M1 6h10" /></Ico></AddPage>
          </PageTabs>
        </Center>

        <RightRail>
          <RightItem><Ico w={20} h={20}><ellipse cx="10" cy="4" rx="6.500" ry="2.500" /><path d="M3.500 4v12c0 3.500 13 3.500 13 0V4" /></Ico></RightItem>
          <RightItem><Ico w={20} h={20}><path d="M1 8h5v10H1zM6 1h4v17H6zM10 5h5v3" /><path d="M10.500 10v7c0 2 8 2 8 0v-7c0-2-8-2-8 0zm0 0c0 2 8 2 8 0" stroke="#d8700f" fill="#fff" /></Ico></RightItem>
          <RightItem><Ico w={20} h={20}><path d="M1 8h5v9H1zM6 1h4v12M10 5h5v3" /><path d="M19 5 10 15l-1-1z" fill="#fff" /><path d="M8 13c-2 1-2 4-4 5 4 1 8 0 8-3z" fill="#2b88d8" stroke="#1267b4" /></Ico></RightItem>
          <RightItem><Ico w={20} h={20}><path d="M5 1h10v17l-5-4.500L5 18z" /></Ico></RightItem>
          <RightItem><Ico w={20} h={20}><path d="M13 2h6v6M15 5h4M2 12v7h8M5 14h5M5 17h4M11 11h9l-3 4v5l-3-2v-3z" /><path d="M1 6c0-6 7-6 9-2V1M10 4H7M11 7c0 5-7 6-9 2v3M2 9h3" stroke="#2f9c48" /></Ico></RightItem>
          <RightItem><Ico w={20} h={20}><path d="M8 1h11v11H8z" fill="#fbd99a" stroke="#e07a10" /><path d="M1 8h10v10H1z" fill="#faf9f8" /><path d="M10.500 5v12l3-3 2 5 2-1-2-4.500h4z" fill="#fff" /></Ico></RightItem>
          <RightItem><Ico w={18} h={18} s="#111"><path d="M9 0v18M0 9h18" /></Ico></RightItem>
          <Gear>
            <Ico w={20} h={20} sw={1.400}>
              <circle cx="10" cy="10" r="2.800" />
              <path d="m8.500 1.500-.7 2.700-2 1.100-2.600-.8-1.600 2.800 2 2v1.400l-2 2 1.600 2.800 2.600-.8 2 1.100.7 2.700h3l.7-2.700 2-1.100 2.600.8 1.600-2.800-2-2V9.300l2-2-1.600-2.800-2.600.8-2-1.100-.7-2.700z" />
            </Ico>
          </Gear>
        </RightRail>
      </Work>

      <StatusBar>
        Page 10 of 10
        <ZoomBox>
          <svg width="122" height="14" viewBox="1709 1012 122 14" stroke="#605e5c" fill="none">
            <path d="M1708.500 1019.500h4" strokeWidth="2" /><path d="M1717 1019.500h100" /><path d="M1770 1014v11" strokeWidth="4" />
            <path d="M1823.500 1019.500h7M1827 1016v7" strokeWidth="1.300" />
          </svg>
          113%
          <Ico w={16} h={12} s="#605e5c"><path d="M.7.700h14.600v10.600H.700zM3 4.500V3h2.500M10.500 3H13v1.500M13 7.500V9h-2.500M5.500 9H3V7.500" /></Ico>
        </ZoomBox>
      </StatusBar>

      <Taskbar>
        <Weather>
          <svg width="27" height="32" viewBox="20 1036 27 32">
            <defs><linearGradient id="sun" x1="0" y1="0" x2="0" y2="1"><stop offset="0" stopColor="#f9c22f" /><stop offset="1" stopColor="#ef6a1c" /></linearGradient></defs>
            <circle cx="31" cy="1055" r="10.300" fill="url(#sun)" />
            <circle cx="38" cy="1046" r="8" fill="#c42b1c" />
            <text x="38" y="1050" fontSize="11" fill="#fff" textAnchor="middle" fontFamily="Open Sans, sans-serif">2</text>
          </svg>
          <div><span>14°C</span><span>Güneşli</span></div>
        </Weather>
        <Apps>
          <svg width="23" height="23" viewBox="0 0 23 23">
            <defs><linearGradient id="win" x1="0" y1="0" x2="1" y2="1"><stop offset="0" stopColor="#4cc2f5" /><stop offset="1" stopColor="#0067c8" /></linearGradient></defs>
            <path d="M0 0h11v11H0zM12 0h11v11H12zM0 12h11v11H0zM12 12h11v11H12z" fill="url(#win)" />
          </svg>
          <TaskSearch>
            <Ico w={15} h={15} s="#3b3b3b" sw={1.700}><circle cx="6.500" cy="6.500" r="5.300" /><path d="m10.500 10.500 4 4" /></Ico>
            Search
          </TaskSearch>
          <AppButton><S24><path d="M1 7h17v15.500H1z" fill="#2b2b2b" /><path d="M6.500 1H24v16H6.500z" fill="#fff" opacity=".85" /><path d="M6.500 7H18v10H6.500z" fill="#bdbdbd" /></S24></AppButton>
          <AppButton><CopilotArt id="tb" size={24} /></AppButton>
          <AppButton $state="run"><S24><path d="M0 2.500C0 1.500.5 1 1.500 1H8l2 3.500H0z" fill="#d99a07" /><path d="M0 6h8.500L11 3.500h11.500c1 0 1.500.5 1.500 1.500v15c0 1.500-1 2.500-2 2.500H2c-1 0-2-1-2-2.500z" fill="#fbcb4c" /><path d="M4 22.500V18c0-1.500 1-2.500 2.500-2.500h11C19 15.500 20 16.500 20 18v4.500z" fill="#1a7fd0" /><path d="M8 19.500h8" stroke="#0f5f9f" strokeWidth="1.500" /></S24></AppButton>
          <AppButton><S24><path d="M6.500 6V3c0-1 .5-1.500 1.500-1.500h8c1 0 1.500.5 1.500 1.500v3" fill="none" stroke="#3ab5ec" strokeWidth="2" /><path d="M.5 6h23v14c0 2.500-1 3.500-3.500 3.500H4c-2.500 0-3.500-1-3.500-3.500z" fill="#17497f" /><path d="M7.500 10h4v4h-4z" fill="#f25022" /><path d="M12.500 10h4v4h-4z" fill="#7fba00" /><path d="M7.500 15h4v4h-4z" fill="#00a4ef" /><path d="M12.500 15h4v4h-4z" fill="#ffb900" /></S24></AppButton>
          <AppButton><S24><path d="M0 0h24v24H0z" fill="#1e3fae" /><path d="M10.500 5v11.500H17" stroke="#fff" strokeWidth="3" fill="none" /></S24></AppButton>
          <AppButton $state="run"><S24><circle cx="12" cy="12" r="11.300" fill="#1ed760" /><path d="M5 8.500c5-1.500 10-1 14.500 1.300M6 12.300c4-1.200 8.500-.8 12.300 1.200M6.800 16c3.500-1 7-.6 10 1" stroke="#101010" strokeWidth="2" fill="none" strokeLinecap="round" /></S24></AppButton>
          <AppButton><S24>
            <defs>
              <linearGradient id="edge" x1="0" y1="0" x2="1" y2=".2"><stop offset="0" stopColor="#1c7fd0" /><stop offset=".5" stopColor="#2fb8dc" /><stop offset="1" stopColor="#5fd86f" /></linearGradient>
              <linearGradient id="edge2" x1="0" y1="0" x2="0" y2="1"><stop offset="0" stopColor="#1a8fdd" /><stop offset="1" stopColor="#0c4e9c" /></linearGradient>
            </defs>
            <path d="M0 12C0 5 5 0 12 0s12 5 12 10c0 4-3 6-6 6-4 0-4-1-3-2.500C16.500 10.500 14 8 11 8 6 8 0 10 0 12z" fill="url(#edge)" />
            <path d="M0 12c0-4 4-6 8-5 5 0 7.500 3 7 6-1-2-4-2-5 .5-1.500 4 3 8 8 6.500 1.500-.5 3-1 3.500-1C20 22 16 24 12 24 5 24 0 19 0 12z" fill="url(#edge2)" />
          </S24></AppButton>
          <AppButton $state="run"><S24><path d="M7 0h10l2 2.500h2l1 3-.7 2.500.7 2-3 9c-2 2-4.500 4-7 5-2.500-1-5-3-7-5L2 10l.7-2L2 5.500l1-3h2z" fill="#fb4a20" /><path d="m12 4.500 5-.5 2.500 4-2.500 5 1 2-6 5-6-5 1-2-2.500-5L7 4z" fill="#fff" /><path d="M7 8.500 11 10l-1 3-2 1M17 8.500 13 10l1 3 2 1M9.500 17l2.500-1.500 2.500 1.500" stroke="#fb542b" strokeWidth="1.300" fill="none" /></S24></AppButton>
          <AppButton $state="run"><S24><circle cx="20" cy="6.500" r="2.600" fill="#5059c9" /><circle cx="13" cy="4.500" r="3.700" fill="#7b83eb" /><path d="M17 10h6.500v6c0 4-4 4.500-6 2.500z" fill="#5059c9" /><path d="M8 10h11v7c0 8-11 7.500-11 0z" fill="#7b83eb" /><path d="M1 7.500h12v11H1z" fill="#4b53bc" /><path d="M4 10.500h6M7 10.500V16" stroke="#fff" strokeWidth="1.600" /></S24></AppButton>
          <AppButton $state="run"><S24><circle cx="12" cy="12" r="12" fill="#2da94f" /><path d="M12 12 10 24c8 1.500 14-4 14-12 0-2-.5-4-1.500-6H12z" fill="#fbc116" /><path d="M1.600 6A12 12 0 0 1 22.400 6.500H12L7 14z" fill="#e33b2e" /><circle cx="12" cy="12" r="6" fill="#fff" /><circle cx="12" cy="12" r="4.600" fill="#1b73e8" /></S24></AppButton>
          <AppButton $state="run"><S24><rect x="0" y="0" width="17" height="16" rx="1.500" fill="#f1eeee" /><path d="M2.800 13V3.500H14" fill="none" stroke="#d83b01" strokeWidth="3.200" strokeDasharray="2.800 .7" /><path d="M3.500 14.300H8" stroke="#d83b01" strokeWidth="2" /><path d="M13.500 5v9.500H20M8 14.500h6l1 5" stroke="#8f9398" strokeWidth="2.500" fill="none" /><circle cx="21" cy="14" r="2" fill="#fff" stroke="#1490df" strokeWidth="1.700" /><circle cx="14" cy="21.500" r="2" fill="#fff" stroke="#1490df" strokeWidth="1.700" /></S24></AppButton>
          <AppButton $state="active"><S24><path d="M0 0h24v24H0z" fill="#e74856" /><path d="M12 0h10v24H12z" fill="#d99a0b" /><path d="M16 4h6v20h-6z" fill="#c98407" /><path d="M7 6h9v18H7z" fill="#edba22" /><path d="M2 12h8.500v12H2z" fill="#fbe06a" /></S24></AppButton>
        </Apps>
        <Tray>
          <Ico w={10} h={7} s="#1b1b1b" sw={1.400}><path d="m.5 6 4.500-5 4.500 5" /></Ico>
          <TrayItem $w={52}><svg width="18" height="18" viewBox="0 0 18 18"><path d="M3 12c-3-2-1-6 2-6 1-4 7-4 8 0 4 0 4 5 1 6z" fill="#8a8a8a" stroke="#444" /><circle cx="11.500" cy="12" r="5" fill="#d92c2c" /><path d="m9.700 10.200 3.600 3.600m0-3.600-3.600 3.600" stroke="#fff" strokeWidth="1.200" /></svg></TrayItem>
          <TrayItem $w={14}><svg width="17" height="12" viewBox="0 0 17 12"><path d="M4 11.500C0 11.500-1 7 3 6 3-1 11-1 12 4c5 0 6 7 1 7.500z" fill="#0f6cbd" /><path d="M4 11.500C1 11 1 8 4 7.500c2-1 3 0 5 1L14 11z" fill="#28a8ea" /></svg></TrayItem>
          <TrayItem $w={61}>ENG</TrayItem>
          <TrayItem $w={16}><Ico w={16} h={13} s="#222"><path d="M1 5c4-5 10-5 14 0M3.500 7.500c2.500-3 6.500-3 9 0M6 10c1-1.500 3-1.500 4 0" /><circle cx="8" cy="11.500" r=".8" /></Ico></TrayItem>
          <TrayItem $w={32}><Ico w={17} h={14} s="#222"><path d="M1 5h2.500L7 1.500v11L3.500 9H1zM9.500 5c1 1 1 3 0 4M12 3c2 2 2 6 0 8M14.300 1c2.500 3 2.500 9 0 12" /></Ico></TrayItem>
          <TrayItem $w={16}><Ico w={16} h={13} s="#222"><path d="M5 4h9v8H2V8M15 6.500v3" /><path d="M6 6h7v4.500H4z" fill="#222" /><path d="M2 0v3M5 0v3M1 3h5v3H1zM3.500 6v2" fill="#222" /></Ico></TrayItem>
          <Clock>{"7:56 AM\n4/28/2025"}</Clock>
        </Tray>
      </Taskbar>
    </Screen>
  );
}
